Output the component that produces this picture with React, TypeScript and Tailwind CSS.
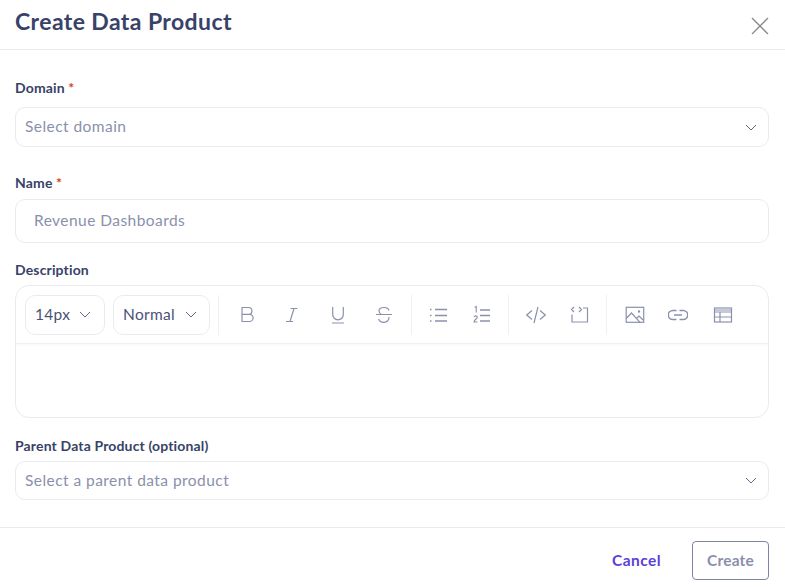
import React from "react";

const font = "font-['Lato','Noto_Sans',sans-serif]";

function Chevron({ className = "" }: { className?: string }) {
  return (
    <svg width="12" height="7" viewBox="0 0 12 7" fill="none" stroke="#5f678c" strokeWidth="1" className={className}>
      <path d="M1 1l5 5 5-5" />
    </svg>
  );
}

function Tool({ w, children }: { w: string; children: React.ReactNode }) {
  return (
    <div className={`${w} h-[20px] flex items-center justify-center shrink-0`}>
      <svg width="20" height="20" viewBox="0 0 20 20" fill="none" stroke="#8b91ad" strokeWidth="1.2">
        {children}
      </svg>
    </div>
  );
}

function Sep() {
  return <div className="w-px h-[40px] bg-[#eef0f4] shrink-0" />;
}

function Label({ text, req }: { text: string; req?: boolean }) {
  return (
    <div className="text-[14px] leading-[16px] font-bold tracking-[0.15px] text-[#384268]">
      {text}
      {req && <span className="text-[#d5401c]"> *</span>}
    </div>
  );
}

function SelectBox({ text, h }: { text: string; h: string }) {
  return (
    <div className={`${h} border border-[#e9ebf0] rounded-[10px] flex items-center justify-between pl-[9px] pr-[11px]`}>
      <span className="text-[15.5px] tracking-[0.45px] text-[#8a90ac]">{text}</span>
      <Chevron />
    </div>
  );
}

export default function App() {
  return (
    <div className={`${font} w-[785px] h-[587px] bg-white flex flex-col overflow-hidden`}>
      <div className="h-[50px] shrink-0 border-b border-[#e9ebf0] flex items-center justify-between pl-[15px] pr-[15px] pb-[6px]">
        <h1 className="text-[23px] font-bold tracking-[0.4px] text-[#384268] leading-none">Create Data Product</h1>
        <svg width="20" height="20" viewBox="0 0 20 20" stroke="#8a8a8a" strokeWidth="1.4" className="mt-[8px]">
          <path d="M2 2l16 16M18 2L2 18" />
        </svg>
      </div>

      <div className="flex-1 pl-[15px] pr-[16px] pt-[30px] flex flex-col">
        <Label text="Domain" req />
        <div className="mt-[11px]">
          <SelectBox text="Select domain" h="h-[40px]" />
        </div>

        <div className="mt-[28px]">
          <Label text="Name" req />
        </div>
        <div className="mt-[8px] h-[44px] border border-[#e9ebf0] rounded-[10px] flex items-center pl-[18px] text-[15.5px] tracking-[0.45px] text-[#8a90ac]">
          Revenue Dashboards
        </div>

        <div className="mt-[19px]">
          <Label text="Description" />
        </div>
        <div className="mt-[7px] h-[133px] border border-[#e9ebf0] rounded-[14px] overflow-hidden">
          <div className="h-[58px] border-b border-[#f1f2f5] flex items-center pl-[9px] shadow-[0_1px_2px_rgba(30,40,80,0.03)]">
            <div className="w-[80px] h-[40px] border border-[#e9ebf0] rounded-[10px] flex items-center justify-between pl-[9px] pr-[13px] text-[15.5px] tracking-[0.3px] text-[#4a5275] shrink-0">
              14px
              <Chevron />
            </div>
            <div className="ml-[8px] w-[97px] h-[40px] border border-[#e9ebf0] rounded-[10px] flex items-center justify-between pl-[9px] pr-[12px] text-[15.5px] tracking-[0.3px] text-[#4a5275] shrink-0">
              Normal
              <Chevron />
            </div>
            <div className="ml-[8px]"><Sep /></div>
            <div className="ml-[5px]">
              <Tool w="w-[45.5px]">
                <path d="M5 2.500h6.500a3.400 3.400 0 010 6.800H5zM5 9.300h7.500a3.600 3.600 0 010 7.200H5z" />
              </Tool>
            </div>
            <Tool w="w-[45.5px]">
              <path d="M8.500 3.500h7M4 16.500h7M12 3.500L8 16.500" />
            </Tool>
            <Tool w="w-[45.5px]">
              <path d="M4.700 2v7.500a5.300 5.300 0 0010.600 0V2M4 18h12" />
            </Tool>
            <Tool w="w-[46.5px]">
              <path d="M15 5.500C14.500 3.500 12.300 2.500 10 2.500 7.300 2.500 5 3.800 5 6c0 1.500.8 2.700 2.500 3.500M2 9.500h16M15 12c.4 3-2 5.300-5 5.300-2.700 0-4.800-1.300-5.300-3.500" />
            </Tool>
            <div className="ml-[4px]"><Sep /></div>
            <div className="ml-[4px]">
              <Tool w="w-[44px]">
                <path d="M7 4.500h12M7 10.500h12M7 16h12M2 4.500h1.500M2 10.500h1.500M2 16h1.500" strokeWidth="1.4" />
              </Tool>
            </div>
            <Tool w="w-[44px]">
              <path d="M8 5h10M8 10.500h10M8 16h10" strokeWidth="1.4" />
              <path d="M2.700 2.500l1.500-1v6M2 12c.4-1.500 3.300-1.500 3.300.3 0 1.300-3.300 2.500-3.300 4.700h3.500" strokeWidth="1.1" />
            </Tool>
            <div className="ml-[4px]"><Sep /></div>
            <div className="ml-[5px]">
              <Tool w="w-[44px]">
                <path d="M6 5.500L.7 10 6 14.500M14 5.500L19.300 10 14 14.500M12 2L8 18" />
              </Tool>
            </div>
            <Tool w="w-[44px]">
              <path d="M4 2L1.500 4.500 4 7M9 2l2.500 2.500L9 7M2 9.500V17h15.500V3H13" />
            </Tool>
            <div className="ml-[4px]"><Sep /></div>
            <div className="ml-[6px]">
              <Tool w="w-[43px]">
                <rect x="1.200" y="2.300" width="17.500" height="15" />
                <path d="M1.200 13.500L6.500 8l8.500 9.300M11.500 13.500L14 11l4.700 4.500" />
                <circle cx="14" cy="6.500" r=".6" />
              </Tool>
            </div>
            <Tool w="w-[44.500px]">
              <path d="M8.500 5.500H4.800a4.500 4.500 0 000 9h3.700M11.500 5.500h3.700a4.500 4.500 0 010 9h-3.700M6 10h8" strokeWidth="1.5" />
            </Tool>
            <Tool w="w-[44.500px]">
              <rect x="1.500" y="3" width="17" height="14" />
              <path d="M1.500 7h17M1.500 12h17M7 7v10" />
              <path d="M1.500 5h17" />
            </Tool>
          </div>
        </div>

        <div className="mt-[20px]">
          <Label text="Parent Data Product (optional)" />
        </div>
        <div className="mt-[7px]">
          <SelectBox text="Select a parent data product" h="h-[39px]" />
        </div>
      </div>

      <div className="h-[60px] shrink-0 border-t border-[#e9ebf0] flex items-start justify-end pr-[16px] pt-[13px]">
        <button className="mt-[11px] mr-[31px] text-[15.5px] leading-[16px] font-bold tracking-[0.45px] text-[#5b3fd6]">Cancel</button>
        <button className="w-[77px] h-[39px] border border-[#7d84a3] rounded-[4px] text-[15.5px] font-bold tracking-[0.2px] text-[#8a90ac]">Create</button>
      </div>
    </div>
  );
}
